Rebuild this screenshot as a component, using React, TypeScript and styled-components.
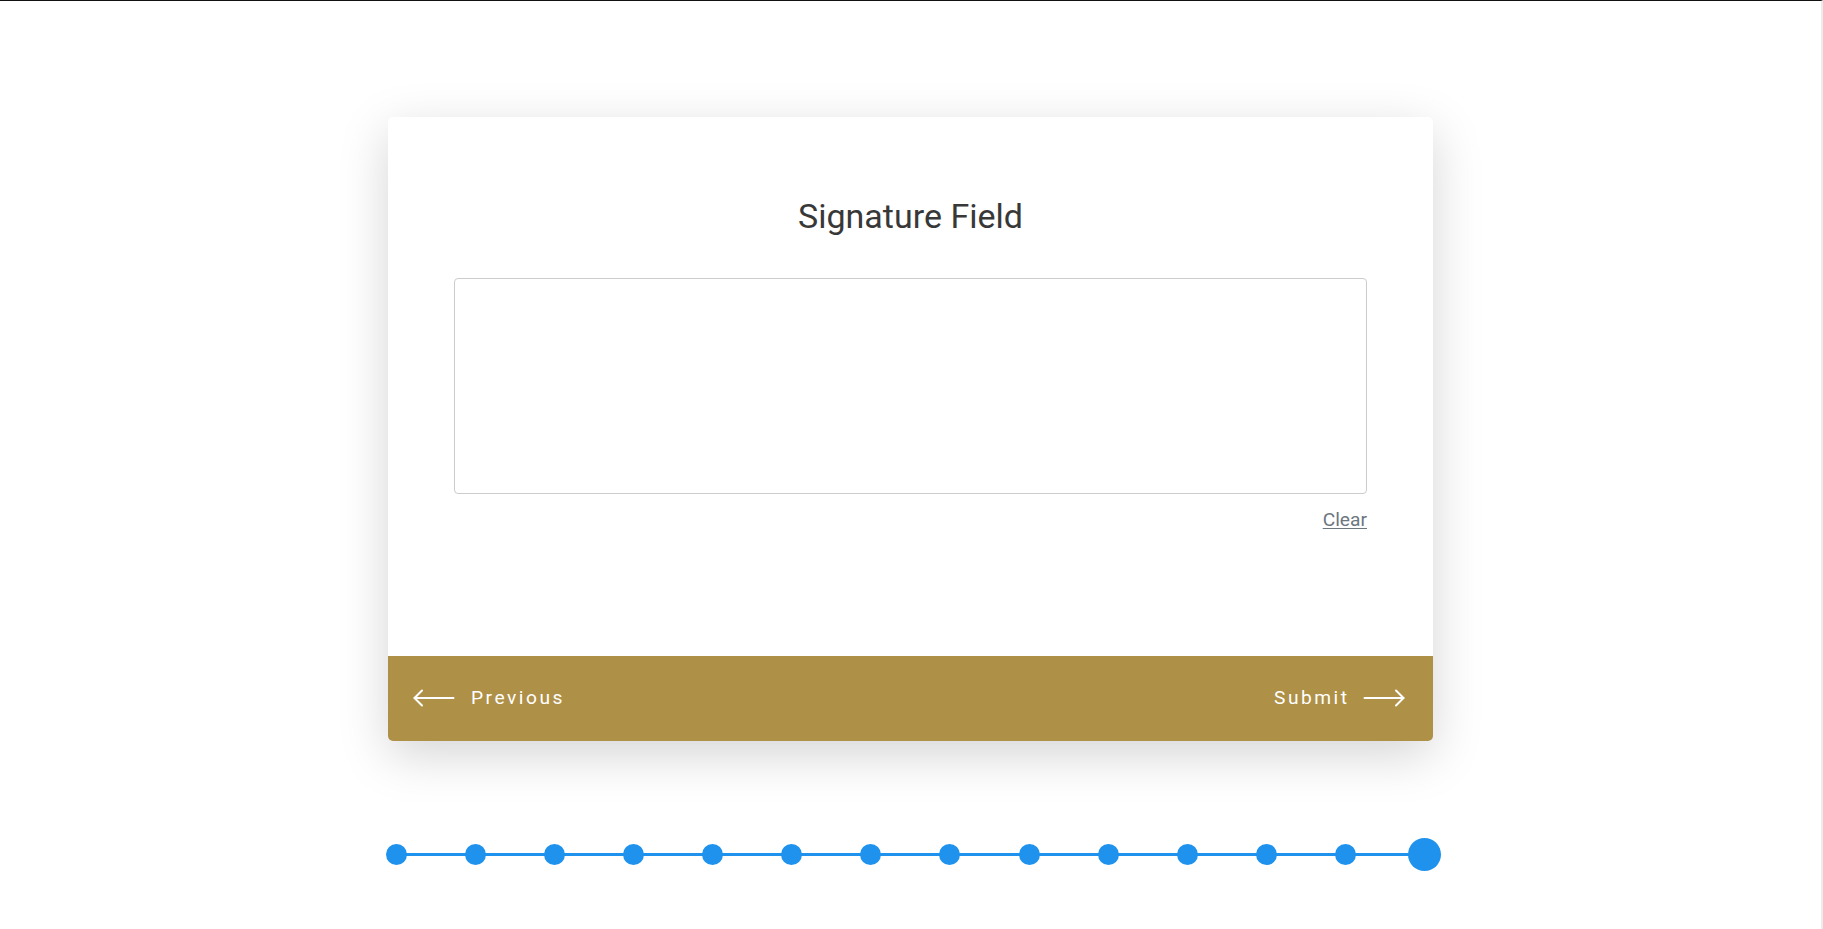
import React, { useState } from "react";
import styled, { createGlobalStyle } from "styled-components";

const GlobalStyle = createGlobalStyle`
  html, body {
    margin: 0;
    padding: 0;
    background: #ffffff;
  }
  body {
    box-sizing: border-box;
    min-height: 100vh;
    border-top: 1px solid #111111;
    border-right: 2px solid #ececec;
    font-family: Roboto, "Liberation Sans", Arial, sans-serif;
  }
`;

const TOTAL_STEPS = 14;

const ArrowIcon: React.FC<{ dir: "left" | "right" }> = ({ dir }) => (
  <svg
    width="42"
    height="18"
    viewBox="0 0 42 18"
    fill="none"
    stroke="#ffffff"
    strokeWidth="2"
    strokeLinecap="round"
    strokeLinejoin="round"
    style={{ transform: dir === "right" ? "scaleX(-1)" : undefined }}
  >
    <path d="M1.5 9 H40.5" />
    <path d="M9 1.5 L1.5 9 L9 16.5" />
  </svg>
);

const App: React.FC = () => {
  const [current] = useState(TOTAL_STEPS - 1);

  return (
    <Page>
      <GlobalStyle />
      <Card>
        <CardBody>
          <Title>Signature Field</Title>
          <SignaturePad />
          <ClearRow>
            <ClearLink href="#">Clear</ClearLink>
          </ClearRow>
        </CardBody>
        <Footer>
          <NavButton>
            <ArrowIcon dir="left" />
            <NavLabel>Previous</NavLabel>
          </NavButton>
          <NavButton>
            <NavLabel>Submit</NavLabel>
            <ArrowIcon dir="right" />
          </NavButton>
        </Footer>
      </Card>

      <Track>
        {Array.from({ length: TOTAL_STEPS }).map((_, i) => (
          <Step key={i}>
            <Dot active={i === current} />
          </Step>
        ))}
      </Track>
    </Page>
  );
};

const Page = styled.div`
  display: flex;
  flex-direction: column;
  align-items: center;
  padding-top: 116px;
`;

const Card = styled.div`
  width: 1045px;
  background: #ffffff;
  border-radius: 5px;
  overflow: hidden;
  box-shadow: 0 14px 50px rgba(0, 0, 0, 0.17);
`;

const CardBody = styled.div`
  box-sizing: border-box;
  height: 539px;
  padding: 79px 66px 0;
  display: flex;
  flex-direction: column;
`;

const Title = styled.h2`
  margin: 0;
  text-align: center;
  font-size: 34px;
  font-weight: 400;
  line-height: normal;
  color: #383838;
`;

const SignaturePad = styled.div`
  margin-top: 42px;
  height: 216px;
  box-sizing: border-box;
  border: 1px solid #cccccc;
  border-radius: 4px;
`;

const ClearRow = styled.div`
  display: flex;
  justify-content: flex-end;
  margin-top: 14px;
`;

const ClearLink = styled.a`
  font-size: 19.2px;
  line-height: normal;
  color: #6c777f;
  text-decoration: underline;
  text-underline-offset: 2px;
`;

const Footer = styled.div`
  height: 85px;
  background: #af9047;
  display: flex;
  align-items: center;
  justify-content: space-between;
  padding: 0 28px 0 25px;
`;

const NavButton = styled.button`
  display: flex;
  align-items: center;
  gap: 16px;
  background: none;
  border: none;
  padding: 0;
  color: #ffffff;
  font-family: Roboto, "Liberation Sans", Arial, sans-serif;
  font-size: 19.2px;
  line-height: 1;
  letter-spacing: 2.5px;
  cursor: pointer;
`;

const NavLabel = styled.span`
  margin-right: -2.5px;
  padding-bottom: 2px;
`;

const Track = styled.div`
  position: relative;
  width: 1028px;
  height: 33px;
  margin-top: 97px;
  display: flex;
  justify-content: space-between;
  align-items: center;

  &::before {
    content: "";
    position: absolute;
    left: 0;
    right: 0;
    top: 15px;
    height: 3px;
    background: #1e92ed;
  }
`;

const Step = styled.div`
  width: 0;
  display: flex;
  justify-content: center;
  position: relative;
`;

const Dot = styled.span<{ active?: boolean }>`
  flex: none;
  width: ${(p) => (p.active ? "33px" : "21px")};
  height: ${(p) => (p.active ? "33px" : "21px")};
  border-radius: 50%;
  background: #1e92ed;
`;

export default App;
